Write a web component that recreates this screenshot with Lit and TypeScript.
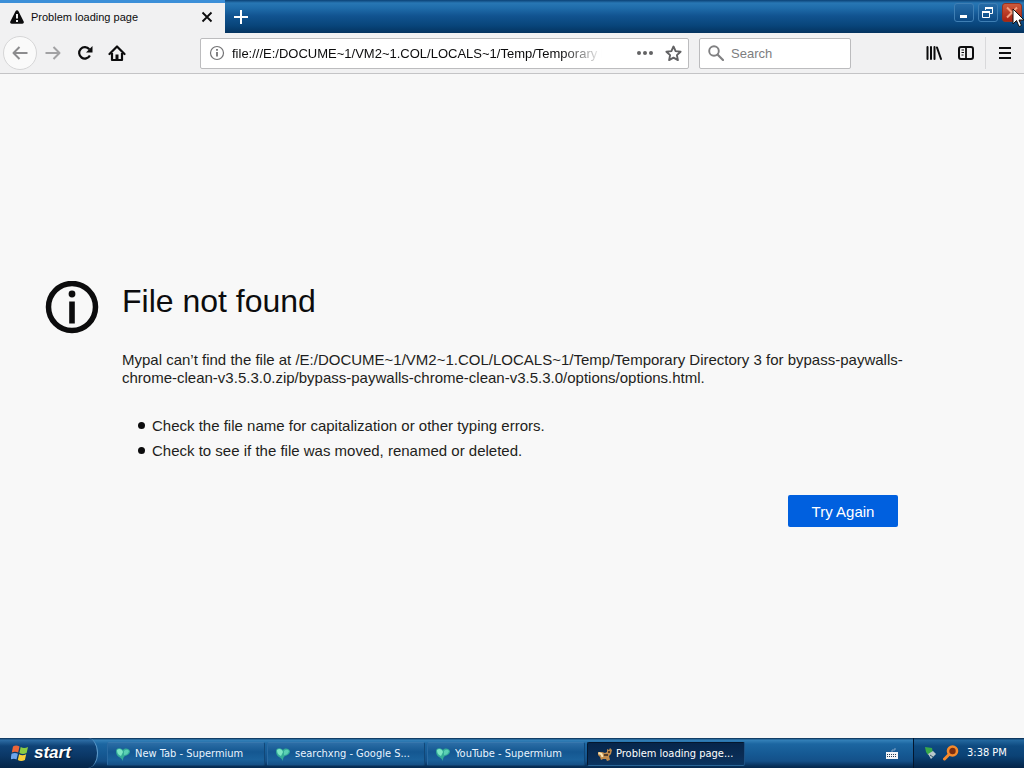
import { LitElement, html, css, svg } from "lit";
import { customElement, property } from "lit/decorators.js";

const leafIcon = svg`<svg width="16" height="16" viewBox="0 0 16 16" aria-hidden="true">
  <path d="M1 5C1 2 5 1 8 4c2-2 5-2 7 1 0 3-2 4-5 5-2 1-2 3-2 5-1-2-2-3-4-4C2 10 1 8 1 5z" fill="#35ad98"/>
  <path d="M2 4c2-2 5-1 6 2l-2 4C3 9 2 7 2 4z" fill="#7ce6c4"/>
  <path d="M9 5c2-2 4-1 5 0-1 3-3 4-5 4z" fill="#5bd0b4"/></svg>`;

const foxIcon = svg`<svg width="16" height="16" viewBox="0 0 16 16" aria-hidden="true">
  <path d="M1 6l4 0 3 1 2-1 0-3 2 1 1-2 2 2-1 4-2 2 1 4-3 1-1-2-3 0-2 1-1-3-2-2z" fill="#c08a4c"/>
  <path d="M1.500 7l3 1 1 3" stroke="#f8e6b8" stroke-width="2" fill="none"/>
  <path d="M7 9h4M12 5v2" stroke="#33251c" stroke-width="1.500"/></svg>`;

@customElement("task-button")
export class TaskButton extends LitElement {
  @property() label = "";
  @property({ type: Boolean }) active = false;

  static styles = css`
    :host { display: block; flex: 0 1 158px; min-width: 0; }
    button {
      display: flex; align-items: center; gap: 4px; width: 100%; height: 24px;
      padding: 0 7px; border: 1px solid #20609b; border-color: #3878ae #124777 #10406f #2a6aa2;
      border-radius: 2px; color: #e8f4ff; text-align: left;
      background: linear-gradient(#2b6da6, #145791 40%, #1a619b 75%, #165086);
      font: 11px/16px "DejaVu Sans Condensed", "Noto Sans", sans-serif;
    }
    button.active {
      border-color: #04172e #1d5285 #2a6596 #04172e; color: #fff; padding-left: 9px; gap: 3px;
      background: linear-gradient(#06264b, #0a2c55 60%, #0b3561);
    }
    svg { flex: none; }
    span { white-space: nowrap; overflow: hidden; }
  `;

  render() {
    return html`<button class=${this.active ? "active" : ""}>
      ${this.active ? foxIcon : leafIcon}<span>${this.label}</span>
    </button>`;
  }
}

@customElement("app-root")
export class AppRoot extends LitElement {
  static styles = css`
    :host {
      display: flex; flex-direction: column; height: 100vh; position: relative; overflow: hidden;
      background: #f8f8f8; color: #0c0c0d; font-family: "Liberation Sans", Arial, sans-serif;
    }
    * { box-sizing: border-box; }
    button { font: inherit; color: inherit; margin: 0; padding: 0; border: 0; background: none; }
    input { font: inherit; margin: 0; padding: 0; border: 0; background: none; width: 0; min-width: 0; outline: 0; }
    svg { display: block; flex: none; }

    .titlebar {
      display: flex; height: 33px; flex: none;
      background: linear-gradient(#0b4175, #2877b4 3px, #1f6caa 8px, #115390 16px, #084479 26px, #04335f);
    }
    .tab {
      display: flex; align-items: center; flex: 0 1 225px; padding: 0 11px 2px 9px; gap: 6px;
      border-top: 3px solid #3c8fd8; background: #f1f1f2;
      font: 11px/16px "Liberation Sans", Arial, sans-serif;
    }
    .tab-title { flex: 1; white-space: nowrap; }
    .newtab { width: 32px; display: grid; place-items: center; }
    .window-buttons { display: flex; gap: 4px; margin-left: auto; padding: 3px 2px; }
    .window-buttons button {
      width: 20px; height: 19px; border: 1px solid #3f7fb4; border-radius: 3px;
      display: grid; place-items: center; background: linear-gradient(#266ca8, #0c4a84);
    }
    .window-buttons .close { background: linear-gradient(#cc5b3d, #a92213); border-color: #98331f; }

    .toolbar {
      display: flex; align-items: center; flex: none; height: 41px; padding: 0 12px 0 3px;
      background: #f1f1f2; border-bottom: 1px solid #c4c4c6;
    }
    .nav { display: flex; align-items: center; width: 197px; flex: none; }
    .nav button { width: 32px; height: 34px; display: grid; place-items: center; }
    .nav .back {
      width: 34px; border: 1px solid #d6d6d7; border-radius: 50%; background: #fafafa;
    }
    .field {
      display: flex; align-items: center; height: 31px; background: #fff;
      border: 1px solid #bcbcbe; border-radius: 2px; font-size: 13px;
    }
    .address { flex: 1; padding: 0 6px 0 8px; min-width: 0; }
    .address input {
      flex: 1; margin: 0 34px 0 7px; color: #0c0c0d;
      -webkit-mask-image: linear-gradient(to left, transparent, #000 40px);
      mask-image: linear-gradient(to left, transparent, #000 40px);
    }
    .address .star { margin-left: 11px; }
    .search { flex: 0 0 152px; margin-left: 10px; padding: 0 8px; gap: 7px; }
    .search input { flex: 1; }
    .search input::placeholder { color: #7d7d80; opacity: 1; }
    .tools { display: flex; align-items: center; margin-left: 75px; }
    .tools .side { margin-left: 16px; }
    .tools .menu { margin-left: 11px; padding-left: 12px; height: 32px; border-left: 1px solid #d9d9db; }

    main { flex: 1; display: flex; align-items: center; min-height: 0; padding: 0 126px 4px 45px; }
    .error { display: flex; gap: 23px; flex: 1; max-width: 1000px; }
    .text { flex: 1; min-width: 0; font-size: 15px; }
    h1 { margin: 0 0 30px; font-size: 32px; line-height: 40px; font-weight: 400; }
    p { margin: 0 -8px 26px 0; line-height: 18px; color: #1e1e20; }
    ul { margin: 0; padding-left: 16px; line-height: 25px; color: #1e1e20; list-style: none; }
    li { display: flex; align-items: center; gap: 7px; }
    li::before { content: ""; width: 7px; height: 7px; border-radius: 50%; background: #0c0c0d; }
    .actions { display: flex; justify-content: flex-end; margin-top: 32px; }
    .retry {
      width: 110px; height: 32px; border-radius: 2px; background: #0060df; color: #fff;
    }

    .taskbar {
      display: flex; height: 30px; flex: none; color: #fff;
      background: linear-gradient(#07284b, #3481b9 2px, #1c66a1 6px, #155993 16px, #145089 23px, #052a51 29px);
    }
    .start {
      display: flex; align-items: center; gap: 5px; width: 98px; padding-left: 11px; flex: none;
      border-right: 1px solid #5d9aca; border-radius: 0 10px 10px 0 / 0 15px 15px 0;
      background: linear-gradient(#0a2c50, #2d6da5 2px, #0f4377 8px, #0b3766 18px, #052548);
      font: italic bold 17px/20px "Liberation Sans", Arial, sans-serif;
      text-shadow: 1px 1px 1px #001a38;
    }
    .tasks { display: flex; align-items: center; gap: 2px; flex: 1; min-width: 0; padding: 2px 0 0 9px; }
    .lang { display: grid; place-items: center; width: 42px; padding-top: 2px; }
    .tray {
      display: flex; align-items: center; gap: 4px; width: 111px; flex: none; padding: 0 8px 0 9px;
      border-left: 1px solid #03172f;
      background: linear-gradient(#06274a, #23689f 2px, #0e4a80 8px, #0b4275 18px, #042448);
      font: 11px/16px "DejaVu Sans Condensed", "Noto Sans", sans-serif;
    }
    .tray svg { flex: none; }
    .tray time { margin-left: 4px; white-space: nowrap; }
    .cursor { position: absolute; top: 8px; right: -2px; pointer-events: none; }
  `;

  private url = "file:///E:/DOCUME~1/VM2~1.COL/LOCALS~1/Temp/Temporary Directory 3 for bypass-paywalls-chrome-clean-v3.5.3.0.zip";

  render() {
    return html`
      <header class="titlebar">
        <div class="tab">
          <svg width="16" height="16" viewBox="0 0 16 16"><path d="M8 1.200c.7 0 1.200.4 1.500 1l5.200 10.400c.5 1.100-.2 2.200-1.500 2.200H2.800c-1.300 0-2-1.100-1.500-2.200L6.500 2.200c.3-.6.8-1 1.500-1z" fill="#0c0c0d"/><path d="M8 5v4.500M8 11v2" stroke="#f1f1f2" stroke-width="2"/></svg>
          <span class="tab-title">Problem loading page</span>
          <button aria-label="Close tab"><svg width="14" height="14" viewBox="0 0 14 14"><path d="M2.500 2.500l9 9m0-9l-9 9" stroke="#0c0c0d" stroke-width="1.800"/></svg></button>
        </div>
        <button class="newtab" aria-label="New tab"><svg width="16" height="16" viewBox="0 0 16 16"><path d="M8 1v14M1 8h14" stroke="#fff" stroke-width="2"/></svg></button>
        <div class="window-buttons">
          <button aria-label="Minimize"><svg width="16" height="15" viewBox="0 0 16 15"><path d="M4 11.500h7" stroke="#fff" stroke-width="3"/></svg></button>
          <button aria-label="Restore"><svg width="16" height="15" viewBox="0 0 16 15" fill="none" stroke="#fff"><path d="M5.500 5V2.500h7v6H10"/><path d="M5 3h8" stroke-width="2"/><path d="M2.500 6.500h7v6h-7z"/><path d="M2 7h8" stroke-width="2"/></svg></button>
          <button class="close" aria-label="Close"><svg width="16" height="15" viewBox="0 0 16 15"><path d="M3 2.500l10 10m0-10l-10 10" stroke="#f5a080" stroke-width="2"/></svg></button>
        </div>
      </header>

      <nav class="toolbar">
        <div class="nav">
          <button class="back" aria-label="Back"><svg width="16" height="16" viewBox="0 0 16 16"><path d="M15.500 8H1.500M7.500 2L1.500 8l6 6" fill="none" stroke="#8c8c8e" stroke-width="2" stroke-linejoin="round"/></svg></button>
          <button aria-label="Forward"><svg width="16" height="16" viewBox="0 0 16 16"><path d="M.5 8h14M8.500 2l6 6-6 6" fill="none" stroke="#a2a2a4" stroke-width="2" stroke-linejoin="round"/></svg></button>
          <button aria-label="Reload"><svg width="16" height="16" viewBox="0 0 16 16"><path d="M12.900 10.500A5.700 5.700 0 1 1 12.300 4.300" fill="none" stroke="#0c0c0d" stroke-width="2.200"/><path d="M15.500 1v6.500H9z" fill="#0c0c0d"/></svg></button>
          <button aria-label="Home"><svg width="18" height="17" viewBox="0 0 18 17"><path d="M1.500 9L9 1.500 16.500 9" fill="none" stroke="#0c0c0d" stroke-width="2.200" stroke-linecap="round" stroke-linejoin="round"/><path d="M4 8v7h10V8" fill="none" stroke="#0c0c0d" stroke-width="2.200" stroke-linejoin="round"/><path d="M7.500 15V9.500h3V15z" fill="#0c0c0d"/></svg></button>
        </div>
        <div class="field address">
          <svg width="16" height="16" viewBox="0 0 16 16"><circle cx="8" cy="8" r="6.500" fill="none" stroke="#737375" stroke-width="1.200"/><path d="M8 7v4.500M8 4v1.700" stroke="#626264" stroke-width="1.600"/></svg>
          <input aria-label="Address" .value=${this.url} />
          <button aria-label="Page actions"><svg width="18" height="16" viewBox="0 0 18 16" fill="#626264"><circle cx="3" cy="8" r="2"/><circle cx="9" cy="8" r="2"/><circle cx="15" cy="8" r="2"/></svg></button>
          <button class="star" aria-label="Bookmark"><svg width="17" height="17" viewBox="0 0 17 17"><path d="M8.500 1.500l2.100 4.600 5 .6-3.700 3.400 1 5-4.400-2.500-4.400 2.500 1-5L1.400 6.700l5-.6z" fill="none" stroke="#626264" stroke-width="1.900" stroke-linejoin="round"/></svg></button>
        </div>
        <div class="field search">
          <svg width="16" height="16" viewBox="0 0 16 16"><circle cx="6" cy="6" r="4.800" fill="none" stroke="#808082" stroke-width="1.900"/><path d="M9.500 9.500l5.500 5.500" stroke="#808082" stroke-width="2.200" stroke-linecap="round"/></svg>
          <input aria-label="Search" placeholder="Search" />
        </div>
        <div class="tools">
          <button aria-label="Library"><svg width="16" height="16" viewBox="0 0 16 16" stroke="#0c0c0d" stroke-width="2" stroke-linecap="round"><path d="M1.500 2v12M5 2v12M8.500 2v12M11 2.500l4 11.500"/></svg></button>
          <button class="side" aria-label="Sidebar"><svg width="16" height="16" viewBox="0 0 16 16" fill="none" stroke="#0c0c0d"><rect x="1" y="2" width="14" height="12" rx="2" stroke-width="2"/><path d="M8 2v12" stroke-width="1.800"/><path d="M3.500 5h2.500M3.500 7.500h2.500M3.500 10h2"/></svg></button>
          <button class="menu" aria-label="Menu"><svg width="14" height="16" viewBox="0 0 14 16"><path d="M1 3h12M1 8h12M1 13h12" stroke="#0c0c0d" stroke-width="2"/></svg></button>
        </div>
      </nav>

      <main>
        <section class="error">
          <svg width="54" height="54" viewBox="0 0 54 54"><circle cx="27" cy="26" r="23.500" fill="none" stroke="#0c0c0d" stroke-width="5.500"/><circle cx="27" cy="13" r="3.400" fill="#0c0c0d"/><path d="M27 20.500V42.500" stroke="#0c0c0d" stroke-width="5.600"/></svg>
          <div class="text">
            <h1>File not found</h1>
            <p>Mypal can’t find the file at /E:/DOCUME~1/VM2~1.COL/LOCALS~1/Temp/Temporary Directory 3 for bypass-paywalls-chrome-clean-v3.5.3.0.zip/bypass-paywalls-chrome-clean-v3.5.3.0/options/options.html.</p>
            <ul>
              <li>Check the file name for capitalization or other typing errors.</li>
              <li>Check to see if the file was moved, renamed or deleted.</li>
            </ul>
            <div class="actions"><button class="retry">Try Again</button></div>
          </div>
        </section>
      </main>

      <footer class="taskbar">
        <button class="start">
          <svg width="18" height="18" viewBox="0 0 18 18"><path d="M2 2.500Q5 .5 8.500 2.500L7.200 8.500Q4 6.800.8 8.500z" fill="#ec6538"/><path d="M9.700 3Q13 5 17 3L15.600 9Q12 11 8.400 9z" fill="#8ccc43"/><path d="M.5 9.800Q4 8 6.900 9.800L5.500 15.500Q3 13.800-.5 15.500z" fill="#6ea5ec"/><path d="M8.100 10.300Q11.500 12.200 15.200 10.300L13.900 16Q10 18 6.800 16z" fill="#f8cf3a"/></svg>
          start
        </button>
        <div class="tasks">
          <task-button label="New Tab - Supermium"></task-button>
          <task-button label="searchxng - Google S..."></task-button>
          <task-button label="YouTube - Supermium"></task-button>
          <task-button label="Problem loading page..." active></task-button>
        </div>
        <button class="lang" aria-label="Keyboard layout"><svg width="14" height="12" viewBox="0 0 14 12"><path d="M7 4V2h3V0" stroke="#7fa2c4" fill="none"/><rect x="1" y="4" width="12" height="7" fill="#f2f5f8"/><path d="M2 6.500h10M2 8.500h10" stroke="#273f58" stroke-dasharray="1 1"/></svg></button>
        <div class="tray">
          <svg width="16" height="16" viewBox="0 0 16 16"><path d="M2 2l7 1 1 5-5 2-2-3z" fill="#38a84a"/><path d="M5 9l5-3 3 3-5 5z" fill="#b9c8cc"/><path d="M7 10l3 2" stroke="#3c5968"/></svg>
          <svg width="16" height="16" viewBox="0 0 16 16"><circle cx="9.500" cy="6" r="4.500" fill="#7a2e10" stroke="#f58a2c" stroke-width="2.600"/><path d="M6 9.500L1.500 14" stroke="#f58a2c" stroke-width="3" stroke-linecap="round"/></svg>
          <time>3:38 PM</time>
        </div>
      </footer>
      <svg class="cursor" width="14" height="20" viewBox="0 0 14 20"><path d="M1 1v15l3.500-3.500L7 18.500l2.500-1-2.500-5.500h5z" fill="#fff" stroke="#111"/></svg>
    `;
  }
}
